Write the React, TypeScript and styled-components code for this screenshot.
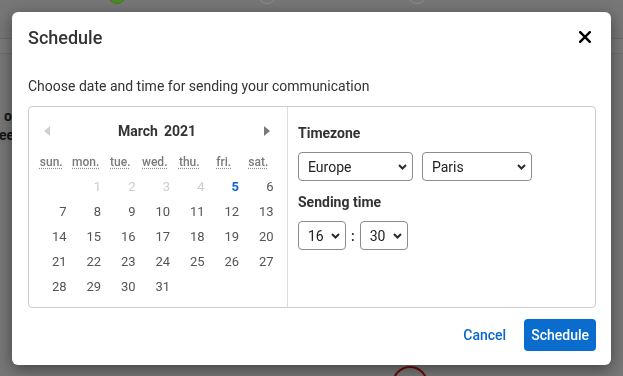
import React from "react";
import styled, { createGlobalStyle } from "styled-components";

const Global = createGlobalStyle`
  html, body { margin: 0; padding: 0; width: 100%; height: 100%; overflow: hidden; }
  body { font-family: Roboto, "Liberation Sans", sans-serif; background: #767676; }
  * { box-sizing: border-box; }
`;

/* ---------- dimmed page behind the modal ---------- */
const Page = styled.div`
  height: 376px;
  display: flex;
  flex-direction: column;
  background: #777777;
  overflow: hidden;
`;
const TopBar = styled.div`
  height: 39px;
  border-bottom: 1px solid #6c6c6c;
  display: flex;
  gap: 132px;
  padding-left: 108px;
`;
const StepDot = styled.span<{ $done?: boolean }>`
  width: 18px;
  height: 18px;
  margin-top: -14px;
  border-radius: 50%;
  border: 1px solid ${(p) => (p.$done ? "#3f7a1c" : "#8c8c8c")};
  background: ${(p) => (p.$done ? "#4d8a22" : "#777777")};
`;
const SubBar = styled.div`
  height: 15px;
  border-bottom: 1px solid #6e6e6e;
  background: #7a7a7a;
`;
const SideText = styled.div`
  padding-top: 53px;
  display: flex;
  flex-direction: column;
  font-size: 14px;
  font-weight: 700;
  line-height: 19px;
  color: #151515;
  white-space: nowrap;
`;
const SideLine = styled.span<{ $shift: number }>`
  margin-left: ${(p) => p.$shift}px;
`;
const PageFoot = styled.div`
  margin-top: auto;
  height: 10px;
  padding-left: 392px;
`;
const RedRing = styled.span`
  display: block;
  width: 36px;
  height: 36px;
  border-radius: 50%;
  border: 2px solid #6e0a0a;
`;

/* ---------- modal ---------- */
const Overlay = styled.div`
  position: fixed;
  inset: 0;
  display: flex;
  justify-content: center;
  align-items: flex-start;
  padding-top: 12px;
`;
const Modal = styled.div`
  width: 599px;
  background: #ffffff;
  border-radius: 6px;
  box-shadow: 0 4px 16px rgba(0, 0, 0, 0.45);
  color: #333333;
`;
const Header = styled.div`
  height: 50px;
  display: flex;
  align-items: center;
  justify-content: space-between;
  padding: 0 20px 0 16px;
`;
const Title = styled.h2`
  margin: 0;
  font-size: 18px;
  font-weight: 500;
  color: #333333;
`;
const CloseButton = styled.button`
  border: none;
  background: none;
  padding: 0;
  width: 12px;
  height: 12px;
  display: flex;
  cursor: pointer;
`;
const Body = styled.div`
  padding: 14px 15px 0 16px;
`;
const Description = styled.p`
  margin: 0;
  font-size: 14px;
  line-height: 20px;
  color: #333333;
`;
const Box = styled.div`
  margin-top: 10px;
  display: flex;
  border: 1px solid #cccccc;
  border-radius: 4px;
`;
const CalendarPanel = styled.div`
  width: 259px;
  border-right: 1px solid #dddddd;
  padding: 12px 0 8px 5px;
`;
const MonthHeader = styled.div`
  height: 24px;
  display: flex;
  align-items: center;
  justify-content: space-between;
  padding: 0 17px 0 10px;
`;
const NavArrow = styled.button`
  border: none;
  background: none;
  padding: 0;
  width: 6px;
  height: 10px;
  display: flex;
`;
const MonthTitle = styled.div`
  display: flex;
  gap: 6px;
  font-size: 14px;
  font-weight: 700;
  color: #333333;
`;
const Grid = styled.div<{ $top?: number }>`
  display: grid;
  grid-template-columns: repeat(7, 34.5px);
  margin-top: ${(p) => p.$top ?? 0}px;
`;
const WeekDay = styled.abbr`
  height: 22px;
  line-height: 20px;
  text-align: center;
  font-size: 12px;
  font-weight: 500;
  color: #7a7a7a;
  text-decoration: underline dotted #8a8a8a;
  text-underline-offset: 2px;
`;
const Day = styled.span<{ $muted?: boolean; $today?: boolean }>`
  height: 25px;
  line-height: 25px;
  text-align: right;
  padding-right: 2px;
  font-size: 13px;
  font-weight: ${(p) => (p.$today ? 700 : 400)};
  color: ${(p) => (p.$today ? "#0a66c8" : p.$muted ? "#cccccc" : "#555555")};
`;
const SettingsPanel = styled.div`
  flex: 1;
  padding: 16px 10px 0 10px;
`;
const Label = styled.div`
  font-size: 14px;
  font-weight: 700;
  line-height: 20px;
  color: #333333;
  margin-bottom: 9px;
`;
const SelectRow = styled.div<{ $gap: number }>`
  display: flex;
  align-items: center;
  gap: ${(p) => p.$gap}px;
  margin-bottom: 11px;
`;
const SelectWrap = styled.div<{ $w: number }>`
  position: relative;
  width: ${(p) => p.$w}px;
  height: 29px;
`;
const Select = styled.select`
  appearance: none;
  -webkit-appearance: none;
  width: 100%;
  height: 29px;
  border: 1px solid #8c8c8c;
  border-radius: 4px;
  background: #ffffff;
  padding: 0 20px 0 9px;
  font-family: Roboto, "Liberation Sans", sans-serif;
  font-size: 14px;
  color: #222222;
`;
const Chevron = styled.svg`
  position: absolute;
  right: 6px;
  top: 12px;
  pointer-events: none;
`;
const Colon = styled.span`
  font-size: 14px;
  font-weight: 500;
  color: #222222;
`;
const Footer = styled.div`
  display: flex;
  justify-content: flex-end;
  align-items: center;
  gap: 18px;
  padding: 11px 15px 14px 16px;
`;
const LinkButton = styled.button`
  border: none;
  background: none;
  padding: 0;
  font-family: Roboto, "Liberation Sans", sans-serif;
  font-size: 14px;
  font-weight: 500;
  color: #0a66c8;
  cursor: pointer;
`;
const PrimaryButton = styled.button`
  height: 32px;
  padding: 0 7px;
  border: none;
  border-radius: 4px;
  background: #0a6ccd;
  color: #ffffff;
  font-family: Roboto, "Liberation Sans", sans-serif;
  font-size: 14px;
  font-weight: 500;
  cursor: pointer;
`;

const weekDays = [
  ["sun.", "Sunday"],
  ["mon.", "Monday"],
  ["tue.", "Tuesday"],
  ["wed.", "Wednesday"],
  ["thu.", "Thursday"],
  ["fri.", "Friday"],
  ["sat.", "Saturday"],
];

const ChevronIcon = () => (
  <Chevron width="9" height="6" viewBox="0 0 9 6">
    <path d="M1 1 L4.5 4.5 L8 1" fill="none" stroke="#2b2b2b" strokeWidth="2" />
  </Chevron>
);

function Dropdown({ width, value, options }: { width: number; value: string; options: string[] }) {
  return (
    <SelectWrap $w={width}>
      <Select defaultValue={value}>
        {options.map((o) => (
          <option key={o}>{o}</option>
        ))}
      </Select>
      <ChevronIcon />
    </SelectWrap>
  );
}

const hours = Array.from({ length: 24 }, (_, i) => String(i).padStart(2, "0"));

export default function App() {
  const cells: { d: number | null; muted?: boolean; today?: boolean }[] = [{ d: null }];
  for (let d = 1; d <= 31; d++) cells.push({ d, muted: d < 5, today: d === 5 });

  return (
    <>
      <Global />
      <Page>
        <TopBar>
          <StepDot $done />
          <StepDot />
          <StepDot />
        </TopBar>
        <SubBar />
        <SideText>
          <SideLine $shift={4}>or</SideLine>
          <SideLine $shift={-1}>eek</SideLine>
        </SideText>
        <PageFoot>
          <RedRing />
        </PageFoot>
      </Page>
      <Overlay>
        <Modal role="dialog" aria-label="Schedule">
          <Header>
            <Title>Schedule</Title>
            <CloseButton aria-label="Close">
              <svg width="12" height="12" viewBox="0 0 12 12">
                <path d="M1.2 1.2 L10.8 10.8 M10.8 1.2 L1.2 10.8" stroke="#000" strokeWidth="2.4" strokeLinecap="square" />
              </svg>
            </CloseButton>
          </Header>
          <Body>
            <Description>Choose date and time for sending your communication</Description>
            <Box>
              <CalendarPanel>
                <MonthHeader>
                  <NavArrow aria-label="Previous month">
                    <svg width="6" height="10" viewBox="0 0 6 10">
                      <path d="M6 0 L0 5 L6 10 Z" fill="#cfcfcf" />
                    </svg>
                  </NavArrow>
                  <MonthTitle>
                    <span>March</span>
                    <span>2021</span>
                  </MonthTitle>
                  <NavArrow aria-label="Next month">
                    <svg width="6" height="10" viewBox="0 0 6 10">
                      <path d="M0 0 L6 5 L0 10 Z" fill="#7a7a7a" />
                    </svg>
                  </NavArrow>
                </MonthHeader>
                <Grid $top={9}>
                  {weekDays.map(([s, t]) => (
                    <WeekDay key={s} title={t}>
                      {s}
                    </WeekDay>
                  ))}
                </Grid>
                <Grid>
                  {cells.map((c, i) => (
                    <Day key={i} $muted={c.muted} $today={c.today}>
                      {c.d ?? ""}
                    </Day>
                  ))}
                </Grid>
              </CalendarPanel>
              <SettingsPanel>
                <Label>Timezone</Label>
                <SelectRow $gap={9}>
                  <Dropdown width={115} value="Europe" options={["Africa", "America", "Asia", "Europe"]} />
                  <Dropdown width={110} value="Paris" options={["London", "Madrid", "Paris", "Rome"]} />
                </SelectRow>
                <Label>Sending time</Label>
                <SelectRow $gap={5}>
                  <Dropdown width={48} value="16" options={hours} />
                  <Colon>:</Colon>
                  <Dropdown width={48} value="30" options={["00", "15", "30", "45"]} />
                </SelectRow>
              </SettingsPanel>
            </Box>
          </Body>
          <Footer>
            <LinkButton>Cancel</LinkButton>
            <PrimaryButton>Schedule</PrimaryButton>
          </Footer>
        </Modal>
      </Overlay>
    </>
  );
}
